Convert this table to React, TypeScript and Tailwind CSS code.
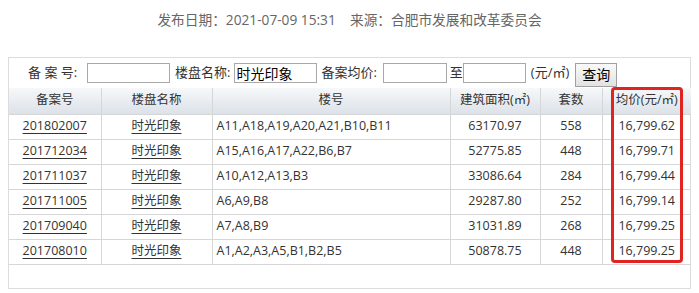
const rows = [
  { id: "201802007", name: "时光印象", bld: "A11,A18,A19,A20,A21,B10,B11", area: "63170.97", units: "558", price: "16,799.62" },
  { id: "201712034", name: "时光印象", bld: "A15,A16,A17,A22,B6,B7", area: "52775.85", units: "448", price: "16,799.71" },
  { id: "201711037", name: "时光印象", bld: "A10,A12,A13,B3", area: "33086.64", units: "284", price: "16,799.44" },
  { id: "201711005", name: "时光印象", bld: "A6,A9,B8", area: "29287.80", units: "252", price: "16,799.14" },
  { id: "201709040", name: "时光印象", bld: "A7,A8,B9", area: "31031.89", units: "268", price: "16,799.25" },
  { id: "201708010", name: "时光印象", bld: "A1,A2,A3,A5,B1,B2,B5", area: "50878.75", units: "448", price: "16,799.25" },
];

const font = { fontFamily: '"Open Sans", "Noto Sans CJK SC", sans-serif' };

export default function App() {
  return (
    <div className="w-[699px] h-[293px] bg-white overflow-hidden text-[#333]" style={font}>
      {/* meta line */}
      <div className="h-[57px] pt-[10px] text-center text-[13.7px] leading-[20px] text-[#666] whitespace-nowrap">
        发布日期：2021-07-09 15:31&nbsp;&nbsp;&nbsp; 来源：合肥市发展和改革委员会
      </div>

      <div className="relative ml-[8px] w-[683px] h-[232px] border border-[#dcdcdc]">
        {/* search form */}
        <div className="h-[30px] flex items-center text-[13px] whitespace-nowrap">
          <span className="ml-[19px] w-[58px]">备 案 号:</span>
          <input className="ml-[1px] w-[83px] h-[20px] border border-[#a9a9a9] outline-none" />
          <span className="ml-[5px]">楼盘名称:</span>
          <input
            defaultValue="时光印象"
            className="ml-[4px] w-[83px] h-[20px] border border-[#a9a9a9] outline-none px-[1px] text-[14px] text-black"
          />
          <span className="ml-[4px]">备案均价:</span>
          <input className="ml-[6px] w-[64px] h-[20px] border border-[#a9a9a9] outline-none" />
          <span className="ml-[3px]">至</span>
          <input className="w-[63px] h-[20px] border border-[#a9a9a9] outline-none" />
          <span className="ml-[5px]">(元/㎡)</span>
          <button className="ml-[6px] mt-[4px] w-[42px] h-[24px] border border-[#a0a0a0] bg-gradient-to-b from-[#fafafa] to-[#e2e2e2] text-[14px] text-black leading-none">
            查询
          </button>
        </div>

        <table className="w-[682px] border-collapse table-fixed text-[12.5px]">
          <colgroup>
            <col className="w-[92px]" />
            <col className="w-[111px]" />
            <col className="w-[238px]" />
            <col className="w-[90px]" />
            <col className="w-[62px]" />
            <col className="w-[89px]" />
          </colgroup>
          <thead>
            <tr className="h-[26px] bg-gradient-to-b from-[#f6f8fa] to-[#dce2e9]">
              {["备案号", "楼盘名称", "楼号", "建筑面积(㎡)", "套数", "均价(元/㎡)"].map((h, i) => (
                <th key={h} className={`font-normal text-center border-[#d6d6d6] ${i === 0 ? "" : "border-l"}`}>
                  {h}
                </th>
              ))}
            </tr>
          </thead>
          <tbody>
            {rows.map((r) => (
              <tr key={r.id} className="h-[25px] border-t border-[#d6d6d6]">
                <td className="text-center underline underline-offset-[3px]">{r.id}</td>
                <td className="text-center border-l border-[#d6d6d6] underline underline-offset-[3px]">{r.name}</td>
                <td className="pl-[4px] border-l border-[#d6d6d6]">{r.bld}</td>
                <td className="text-center border-l border-[#d6d6d6]">{r.area}</td>
                <td className="text-center border-l border-[#d6d6d6]">{r.units}</td>
                <td className="text-center border-l border-[#d6d6d6]">{r.price}</td>
              </tr>
            ))}
            <tr className="border-t border-[#d6d6d6]">
              <td colSpan={6} />
            </tr>
          </tbody>
        </table>

        {/* highlight box */}
        <div className="absolute left-[602px] top-[29px] w-[72px] h-[176px] border-[3px] border-[#e0241f] rounded-[4px]" />
      </div>
    </div>
  );
}
